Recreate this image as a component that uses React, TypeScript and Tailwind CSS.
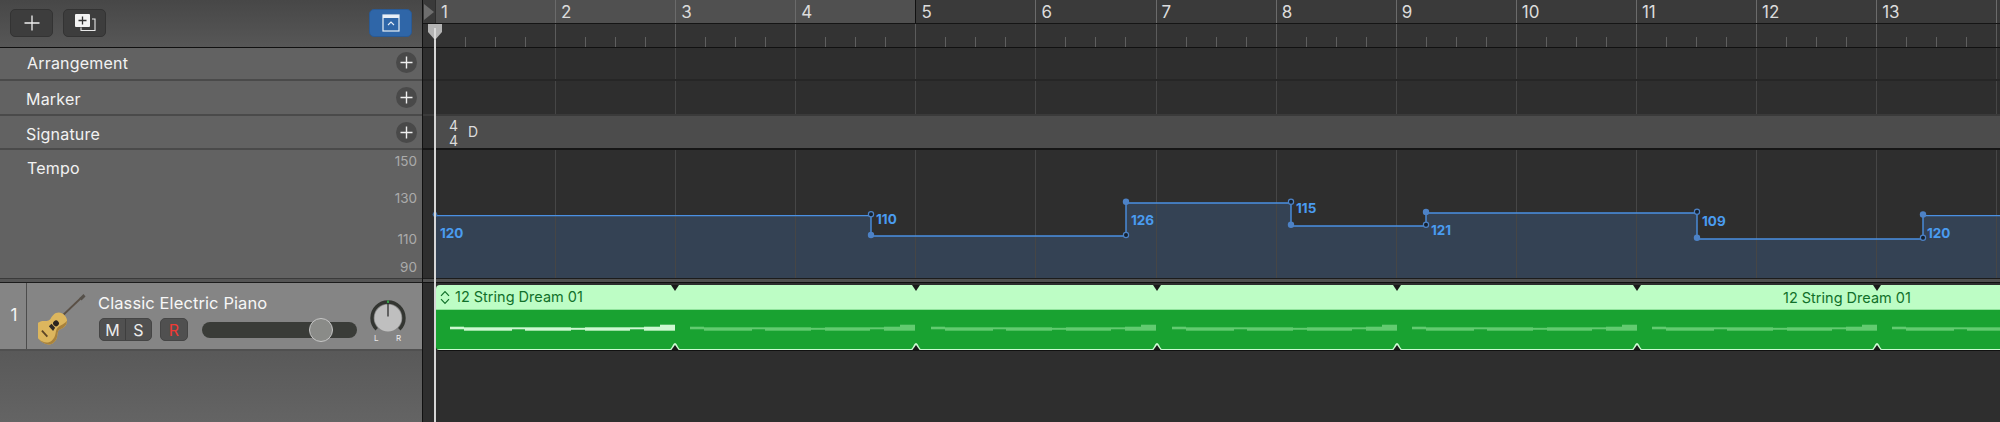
import type { ReactNode } from 'react'

const BARS = [1, 2, 3, 4, 5, 6, 7, 8, 9, 10, 11, 12, 13, 14]
const NOTCHES = [675, 916, 1157, 1397, 1637, 1877]
const PHRASES = [435, 675, 916, 1157, 1397, 1637, 1877]

// [x, width, top, height] relative to start of a phrase
const NOTES = [
  [0, 14, 326.7, 2.6], [14, 48, 327.3, 3.4], [62, 13, 327.3, 2], [75, 46, 327.3, 3.4],
  [121, 14, 327.8, 2], [135, 45, 327.3, 3.4], [180, 14, 327.3, 2], [194, 16, 326.7, 4], [210, 15, 324.7, 6],
]

const TEMPO_LINE = '436,215.6 871,215.6 871,236 1126,236 1126,203 1291,203 1291,226 1426,226 1426,213 1697,213 1697,239 1923,239 1923,215.6 2000,215.6'
const FILLED = [[871, 235], [1126, 201.7], [1291, 224.7], [1426, 212], [1697, 237.7], [1923, 214.5]]
const RINGS = [[871, 214.3], [1126, 235], [1291, 201.7], [1426, 224.7], [1697, 211.7], [1923, 237.7]]
const TEMPO_LABELS = [
  { x: 440, y: 233, t: '120' }, { x: 876, y: 219, t: '110' }, { x: 1131, y: 220, t: '126' }, { x: 1296, y: 208.5, t: '115' },
  { x: 1431, y: 230.5, t: '121' }, { x: 1702, y: 221, t: '109' }, { x: 1927, y: 233, t: '120' },
]

function BarGrid() {
  return (
    <div className="absolute inset-0 flex pl-[12px]">
      {BARS.map(b => <div key={b} className="w-[120.1px] shrink-0 border-l border-[#464646]" />)}
    </div>
  )
}

function HeaderRow({ label, className, textClass, children }: { label: string; className: string; textClass: string; children?: ReactNode }) {
  return (
    <div className={`flex items-center justify-between border-b-2 border-[#4a4a4a] pr-[5px] ${className}`}>
      <span className={`text-[16px] text-[#f2f2f2] tracking-[0.2px] ${textClass}`}>{label}</span>
      {children}
    </div>
  )
}

function PlusDot() {
  return (
    <div className="w-[21px] h-[21px] rounded-full bg-[#494949] flex items-center justify-center">
      <svg width="13" height="13" viewBox="0 0 13 13"><path d="M6.5 0.5v12M0.5 6.5h12" stroke="#efefef" strokeWidth="1.4" /></svg>
    </div>
  )
}

function Guitar() {
  return (
    <svg width="50" height="55" viewBox="38 290 50 55" className="shrink-0">
      <path d="M60 317 L81 297" stroke="#5a5046" strokeWidth="1.8" />
      <path d="M79.5 297 L83.5 293 L85.5 295.5 L81.5 299.5 Z" fill="#55504a" />
      <g transform="rotate(48 52 326) translate(3.4 33.5) scale(0.9)">
        <path d="M54 306 C60 306 63 310 63 315 C63 319 61 320 62 323 C63 326 68 328 68 335 C68 342 61 345 54 345 C47 345 40 342 40 335 C40 328 45 326 46 323 C47 320 45 319 45 315 C45 310 48 306 54 306 Z" fill="#dcb65e" />
        <path d="M63 315 C63 319 61 320 62 323 C63 326 68 328 68 335 C68 342 61 345 54 345 C60 344 65 341 65 335 C65 328 60 326 59 322 C58 318 61 314 60 308 C62 310 63 312 63 315 Z" fill="#a8823c" />
        <circle cx="54" cy="319" r="3.2" fill="#2a2420" />
        <path d="M51 323 h6 l1 4 h-7 Z" fill="#2f2a26" />
        <rect x="49.5" y="335" width="9" height="2" fill="#5c4526" />
      </g>
    </svg>
  )
}

function PanKnob() {
  return (
    <div className="relative w-[40px] h-[46px] shrink-0">
      <svg width="40" height="40" viewBox="0 0 40 40">
        <path d="M8.7 31.3 A16 16 0 1 1 31.3 31.3" fill="none" stroke="#333531" strokeWidth="3.4" />
        <circle cx="20" cy="20" r="13.5" fill="#bfbfbf" />
        <path d="M20 2.5v2.5" stroke="#39d353" strokeWidth="1.4" />
        <path d="M20 5v13.5" stroke="#222" strokeWidth="1.2" />
      </svg>
      <span className="absolute left-[6px] top-[35px] text-[8px] leading-[10px] text-[#ececec]">L</span>
      <span className="absolute left-[28px] top-[35px] text-[8px] leading-[10px] text-[#ececec]">R</span>
    </div>
  )
}

function Region() {
  return (
    <div className="relative ml-[13px] mt-[2px] h-[66px] rounded-l-[4px] overflow-hidden border-b border-[#111]">
      <div className="h-[24px] bg-[#bdfdc5] flex items-center pl-[4px] gap-[5px] text-[#11702a] text-[14.5px]">
        <svg width="10" height="15" viewBox="0 0 10 15" className="shrink-0">
          <path d="M1 5.8 L5 1.6 L9 5.8 M1 9.2 L5 13.4 L9 9.2" fill="none" stroke="#11702a" strokeWidth="1.2" />
        </svg>
        <span>12 String Dream 01</span>
        <span className="absolute left-[1347px] top-[2px]">12 String Dream 01</span>
      </div>
      <div className="h-[41px] bg-[#19a231] border-t border-[#8fe39b] border-b-[1.5px] border-b-[#c9fbd0]" />
      <svg className="absolute inset-0" width="1564" height="65" viewBox="436 285 1564 65">
        {PHRASES.map((start, i) => (
          <g key={start} fill={i === 0 ? '#cdf8d1' : '#62cb70'}>
            {NOTES.map(([x, w, y, h]) => (
              <rect key={x} x={start + 15 + x} y={y} width={w} height={h} />
            ))}
          </g>
        ))}
        {NOTCHES.map(x => (
          <g key={x}>
            <path d={`M${x - 4} 285 L${x + 4} 285 L${x} 291 Z`} fill="#1a1a1a" />
            <path d={`M${x - 7} 350 C${x - 3} 350 ${x - 3} 344 ${x} 343 C${x + 3} 344 ${x + 3} 350 ${x + 7} 350 Z`} fill="#c9fbd0" />
            <path d={`M${x - 4} 350.5 L${x} 345 L${x + 4} 350.5 Z`} fill="#1a1a1a" />
          </g>
        ))}
      </svg>
    </div>
  )
}

export default function App() {
  return (
    <div className="flex w-[2000px] h-[422px] overflow-hidden bg-[#2e2e2e] [font-family:Inter,sans-serif]">
      {/* ── Track headers ── */}
      <div className="w-[422px] shrink-0 flex flex-col bg-[#626262]">
        <div className="h-[48px] flex items-center gap-[10px] px-[10px] pb-[2px] bg-gradient-to-b from-[#474747] to-[#575757] border-b border-[#111]">
          <button className="w-[43px] h-[28px] rounded-[5px] bg-[#3d3d3d] border border-[#333] flex items-center justify-center">
            <svg width="16" height="16" viewBox="0 0 16 16"><path d="M8 0.5v15M0.5 8h15" stroke="#f0f0f0" strokeWidth="1.3" /></svg>
          </button>
          <button className="w-[43px] h-[28px] rounded-[5px] bg-[#3d3d3d] border border-[#333] flex items-center justify-center">
            <svg width="22" height="19" viewBox="0 0 22 19">
              <path d="M7 14.5v3h14V6h-3" fill="none" stroke="#e8e8e8" strokeWidth="1.1" />
              <rect x="1" y="1" width="15" height="13" rx="1" fill="#f4f4f4" />
              <path d="M8.5 3.5v8M4.5 7.5h8" stroke="#333" strokeWidth="1.3" />
            </svg>
          </button>
          <button className="ml-auto w-[43px] h-[28px] rounded-[5px] bg-[#2f66a8] border border-[#2a5a94] flex items-center justify-center">
            <svg width="18" height="18" viewBox="0 0 18 18">
              <rect x="1" y="1" width="16" height="16" fill="none" stroke="#e8eef6" strokeWidth="1.2" />
              <path d="M1 1h16v3H1Z" fill="#e8eef6" />
              <path d="M6 11l3-3 3 3" fill="none" stroke="#e8eef6" strokeWidth="1.1" />
            </svg>
          </button>
        </div>
        <HeaderRow label="Arrangement" className="h-[33px] pl-[27px] pb-[2px]" textClass="mt-[1px]"><PlusDot /></HeaderRow>
        <HeaderRow label="Marker" className="h-[35px] pl-[26px]" textClass="mt-[3px]"><PlusDot /></HeaderRow>
        <HeaderRow label="Signature" className="h-[34px] pl-[26px]" textClass="mt-[3px]"><PlusDot /></HeaderRow>
        <div className="h-[128px] flex justify-between pl-[27px] pr-[5px]">
          <span className="mt-[7px] text-[16px] leading-[22px] text-[#f2f2f2] tracking-[0.2px]">Tempo</span>
          <div className="flex flex-col items-end pt-[3px] text-[13.5px] leading-[16px] text-[#ababab]">
            <span>150</span>
            <span className="mt-[21px]">130</span>
            <span className="mt-[25px]">110</span>
            <span className="mt-[12px]">90</span>
          </div>
        </div>
        <div className="h-[5px] border-t border-[#3a3a3a] border-b border-b-[#1c1c1c] bg-[#555]" />
        <div className="h-[68px] flex bg-[#858585] border-b-2 border-[#505050]">
          <div className="w-[27px] shrink-0 border-r border-[#4c4c4c] flex items-center justify-center pl-[2px] text-[17px] text-[#f5f5f5]">1</div>
          <div className="flex-1 flex items-start pl-[11px] pr-[14px] pt-[8px]">
            <Guitar />
            <div className="ml-[10px] flex flex-col w-[259px]">
              <span className="mt-[1px] text-[16.5px] leading-[22px] text-[#f7f7f7] tracking-[0.1px]">Classic Electric Piano</span>
              <div className="flex items-center mt-[4px]">
                <div className="ml-[1px] w-[53px] h-[23px] flex rounded-[5px] bg-[#505050] border border-[#454545] text-[16px] text-[#ececec]">
                  <span className="flex-1 flex items-center justify-center border-r border-[#3e3e3e]">M</span>
                  <span className="flex-1 flex items-center justify-center">S</span>
                </div>
                <span className="ml-[8px] w-[28px] h-[23px] flex items-center justify-center rounded-[5px] bg-[#505050] border border-[#454545] text-[16px] text-[#ef3a34]">R</span>
                <div className="relative ml-[14px] w-[155px] h-[16px] rounded-full bg-[#3a3c38]">
                  <div className="absolute left-[107px] top-[-4px] w-[24px] h-[24px] rounded-full bg-[#8a8b88] border border-[#c6c6c6]" />
                </div>
              </div>
            </div>
            <div className="mt-[7px] ml-[11px]"><PanKnob /></div>
          </div>
        </div>
        <div className="flex-1 bg-gradient-to-b from-[#595959] to-[#646464]" />
      </div>

      {/* ── Timeline ── */}
      <div className="relative flex-1 min-w-0 flex flex-col border-l border-[#111]">
        <div className="h-[24px] flex bg-[#3a3a3a] border-b border-[#151515] text-[17px] leading-[22px] text-[#dcdcdc]">
          <div className="w-[12px] shrink-0 flex items-center">
            <svg width="12" height="20" viewBox="0 0 12 20"><path d="M1 2 L11 10 L1 18 Z" fill="#6e6e6e" /></svg>
          </div>
          {BARS.map(b => (
            <div key={b} className={`w-[120.1px] shrink-0 pl-[5px] pt-[1px] border-l ${b <= 4 ? 'bg-[#505050]' : ''} ${b === 5 ? 'border-[#111]' : b === 1 ? 'border-[#2e2e2e]' : 'border-[#6b6b6b]'}`}>{b < 14 ? b : ''}</div>
          ))}
        </div>
        <div className="h-[24px] flex pl-[12px] bg-[#333] border-b border-[#111]">
          {BARS.map(b => (
            <div key={b} className="w-[120.1px] shrink-0 flex items-end border-l border-[#5c5c5c]">
              <span className="ml-[29px] w-[1px] h-[10px] bg-[#5f5f5f]" />
              <span className="ml-[29px] w-[1px] h-[10px] bg-[#5f5f5f]" />
              <span className="ml-[29px] w-[1px] h-[10px] bg-[#5f5f5f]" />
            </div>
          ))}
        </div>
        <div className="relative h-[33px] bg-[#2e2e2e] border-b-2 border-[#262626]"><BarGrid /></div>
        <div className="relative h-[35px] bg-[#2e2e2e] border-b-2 border-[#3a3a3a]"><BarGrid /></div>
        <div className="h-[34px] pl-[13px] border-b-2 border-[#161616]">
          <div className="h-full bg-[#4c4c4c] flex items-center pl-[13px] gap-[10px] text-[#dcdcdc] text-[14px] leading-[14px]">
            <div className="mt-[1px] flex flex-col items-center leading-[15px]"><span>4</span><span>4</span></div>
            <span>D</span>
          </div>
        </div>
        <div className="relative h-[128px] bg-[#2e2e2e]">
          <svg className="absolute inset-0" width="1577" height="128" viewBox="423 150 1577 128">
            <polygon points={`${TEMPO_LINE} 2000,278 436,278`} fill="#344254" />
          </svg>
          <BarGrid />
          <svg className="absolute inset-0" width="1577" height="128" viewBox="423 150 1577 128">
            <polyline points={TEMPO_LINE} fill="none" stroke="#4a90e2" strokeWidth="1.4" />
            {FILLED.map(([x, y]) => <circle key={x} cx={x} cy={y} r="3.2" fill="#4d82c6" />)}
            {RINGS.map(([x, y]) => <circle key={x} cx={x} cy={y} r="2.6" fill="#14202e" stroke="#4d82c6" strokeWidth="1.2" />)}
            <circle cx="435" cy="214.5" r="2.4" fill="#3f6ea8" />
            {TEMPO_LABELS.map(l => (
              <text key={l.x} x={l.x} y={l.y + 4.5} fontSize="13.5" fontWeight="700" fill="#4a9cf0">{l.t}</text>
            ))}
          </svg>
        </div>
        <div className="h-[5px] border-t border-[#1c1c1c] bg-[#4f4f4f] border-b border-b-[#101010]" />
        <Region />

        {/* playhead */}
        <div className="absolute left-[11px] top-[24px] bottom-0 w-[2px] bg-[#d6d6d6]" />
        <svg className="absolute left-[4px] top-[24px]" width="16" height="17" viewBox="0 0 16 17">
          <path d="M1 0 H15 V8 L8 16 L1 8 Z" fill="#b4b4b4" />
          <path d="M7 4 V15 H9 V4 Z" fill="#d9d9d9" />
        </svg>
      </div>
    </div>
  )
}
